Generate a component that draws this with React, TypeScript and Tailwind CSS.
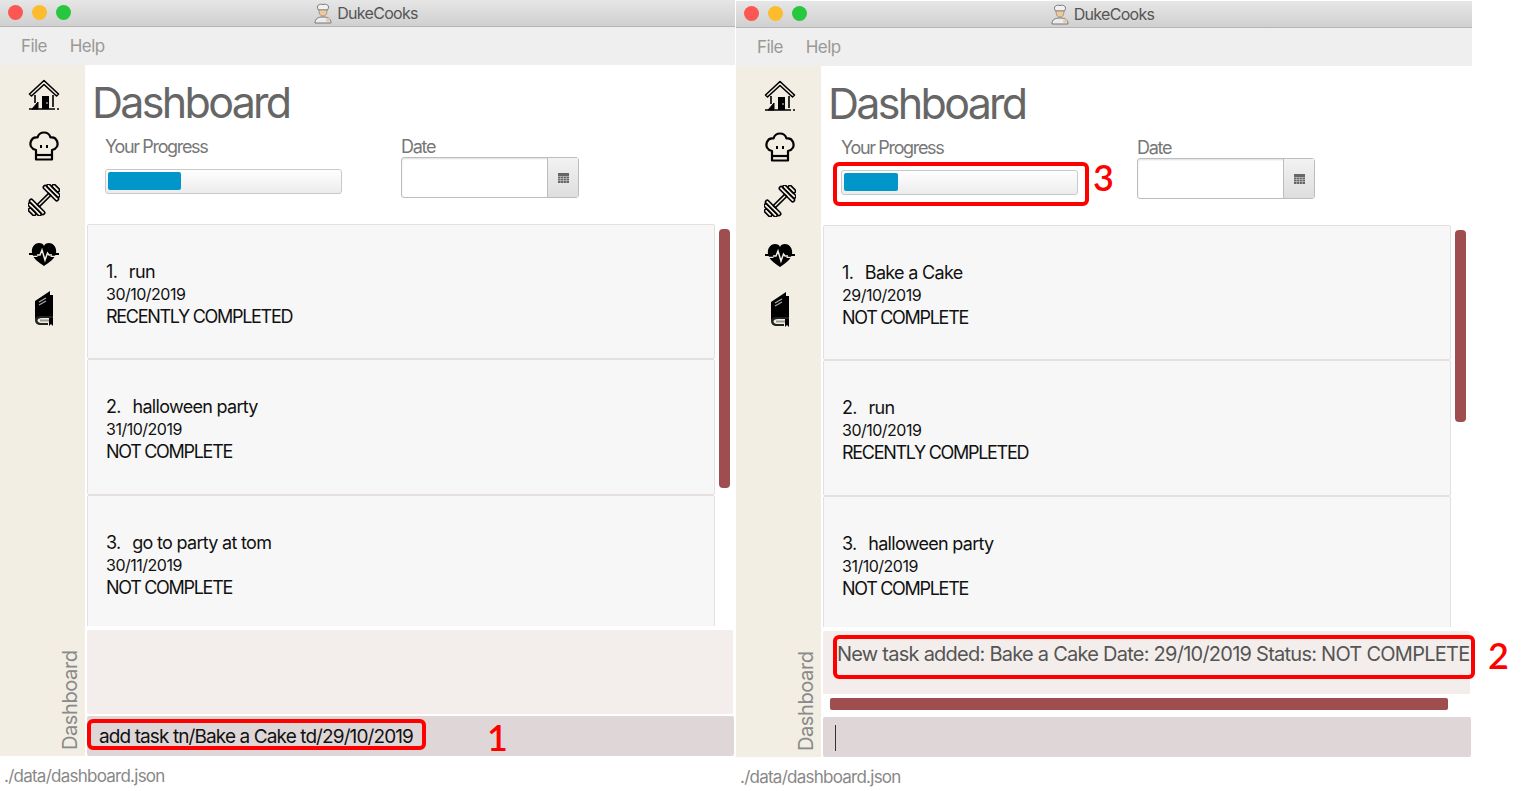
import React from "react";

const FONT = "font-['Inter','Liberation_Sans',sans-serif]";

function HouseIcon() {
  return (
    <svg viewBox="0 0 32 32" className="w-8 h-8" fill="none" stroke="#000">
      <path d="M1.5 15 L16 1.5 L30.5 15 L28.5 17 L16 5.5 L3.5 17 Z" strokeWidth="1.6" strokeLinejoin="round" />
      <path d="M7 16 V24 M25 16 V28" strokeWidth="1.6" />
      <path d="M1 30 H27 M29 30 H31" strokeWidth="1.6" />
      <path d="M4 30 L10 23 V30 Z" fill="#000" strokeWidth="1" />
      <rect x="14" y="17" width="7" height="13" fill="#000" stroke="none" />
      <circle cx="19" cy="24" r="0.8" fill="#fff" stroke="none" />
    </svg>
  );
}

function HatIcon() {
  return (
    <svg viewBox="0 0 30 30" className="w-[30px] h-[30px]" fill="none" stroke="#000" strokeWidth="2.2" strokeLinejoin="round">
      <path d="M7 19 C2 18 0.5 14 2 10 C3.5 6.5 6 6 8.5 6.5 C9.5 3 12.5 1.5 15 1.5 C18 1.5 20.5 3 21.5 6.5 C24 6 26.5 6.5 28 10 C29.5 14 28 18 23 19 V28.5 H7 Z" />
      <path d="M7 24 H23" />
      <path d="M12 14 V17 M18 14 V17" strokeWidth="2" />
    </svg>
  );
}

function DumbbellIcon() {
  return (
    <svg viewBox="0 0 32 32" className="w-8 h-8" fill="none" stroke="#000" strokeWidth="1.6" strokeLinejoin="round" strokeLinecap="round">
      <g transform="rotate(-45 16 16)">
        <rect x="-2.5" y="11.5" width="3.5" height="9" rx="1.7" />
        <rect x="1" y="7.5" width="3.5" height="17" rx="1.7" />
        <rect x="4.5" y="6" width="3.5" height="20" rx="1.7" />
        <path d="M8 14.5 H24 V17.5 H8 Z" />
        <rect x="24" y="6" width="3.5" height="20" rx="1.7" />
        <rect x="27.5" y="7.5" width="3.5" height="17" rx="1.7" />
        <rect x="31" y="11.5" width="3.5" height="9" rx="1.7" />
      </g>
    </svg>
  );
}

function HeartIcon() {
  return (
    <svg viewBox="0 0 32 26" className="w-8 h-[26px]">
      <path d="M16 25 C10 21 5 17.5 4 12 C3 6 7 2 11 2 C13.5 2 15.5 3 16 5 C16.5 3 18.5 2 21 2 C25 2 29 6 28 12 C27 17.5 22 21 16 25 Z" fill="#000" />
      <path d="M1 13 H8 M24 13 H31" fill="none" stroke="#000" strokeWidth="2.2" />
      <path d="M3 15.4 H9.5 M22.5 15.4 H29" fill="none" stroke="#f2eee4" strokeWidth="1.4" />
      <path d="M9 14 H12 L14 9 L17 19 L19.5 12 L21 14 H24" fill="none" stroke="#f2eee4" strokeWidth="1.5" />
    </svg>
  );
}

function BookIcon() {
  return (
    <svg viewBox="0 0 24 36" className="w-6 h-9">
      <path d="M3 11 L18 1 V5 H21 V27 H9 C6 27 3.5 28 3 30 Z" fill="#000" />
      <path d="M7 12 L14 8 M7 15 L14 11" stroke="#aaa" strokeWidth="1.2" />
      <path d="M3 30 C3 27 6 26 9 26 H21 V28 H10 C7 28 5.5 29 5.5 30.5 C5.5 32 7 33 9 33 H16 V35 H9 C5 35 3 33 3 30 Z" fill="#222" />
      <path d="M8 29.5 H17 V31.5 H8 Z" fill="#999" />
      <path d="M17 28 H21 V36 L19 34 L17 36 Z" fill="#000" />
    </svg>
  );
}

function Sidebar() {
  return (
    <div className="w-[85px] shrink-0 bg-[#f2eee4] flex flex-col relative">
      <div className="flex flex-col items-center pl-[3px] pt-[14px]">
        <div className="h-8 flex items-center justify-center"><HouseIcon /></div>
        <div className="h-[30px] mt-[20px] flex items-center justify-center"><HatIcon /></div>
        <div className="h-8 mt-[23px] flex items-center justify-center"><DumbbellIcon /></div>
        <div className="h-7 mt-[24px] flex items-center justify-center"><HeartIcon /></div>
        <div className="h-9 mt-[22px] flex items-center justify-center"><BookIcon /></div>
      </div>
      <div className="mt-auto mb-[6px] ml-[58px] w-[24px] h-[100px] [writing-mode:vertical-rl] rotate-180 text-[20px] leading-[24px] tracking-[-0.4px] text-[#8a8a8a] text-left whitespace-nowrap">
        Dashboard
      </div>
    </div>
  );
}

type Task = { n: number; name: string; date: string; status: string };

function TaskCard({ task, h }: { task: Task; h: string }) {
  return (
    <div className={`${h} shrink-0 bg-[#f7f7f7] border border-[#e5dfdf] rounded-[2px] pl-[18px] pt-[35px] text-[#111]`}>
      <div className="text-[18px] leading-[23px] tracking-[-0.7px]">
        <span className="mr-[3px]">{task.n}.&nbsp;</span> {task.name}
      </div>
      <div className="text-[16px] leading-[23px] tracking-[-0.5px]">{task.date}</div>
      <div className="text-[18px] leading-[22px] tracking-[-1.3px]">{task.status}</div>
    </div>
  );
}

function Header({ progress }: { progress: string }) {
  return (
    <div className="h-[159px] shrink-0 bg-white pl-[7px]">
      <div className="text-[43px] leading-[52px] tracking-[-2.7px] text-[#666] pt-[11px] h-[70px]">Dashboard</div>
      <div className="flex pl-[13px]">
        <div className="w-[296px]">
          <div className="text-[18px] leading-[24px] tracking-[-1.35px] text-[#777]">Your Progress</div>
          <div className="mt-[10px] w-[237px] h-[25px] rounded-[3px] border border-[#c9c9c9] bg-gradient-to-b from-white to-[#ececec] p-[2px]">
            <div className={`${progress} h-[18px] rounded-[2px] bg-[#0096c9]`} />
          </div>
        </div>
        <div>
          <div className="text-[18px] leading-[24px] -mb-[2px] tracking-[-1.3px] text-[#777]">Date</div>
          <div className="w-[178px] h-[41px] flex rounded-[3px] border border-[#bdbdbd] bg-white shadow-[inset_0_1px_2px_#ddd]">
            <div className="flex-1" />
            <div className="w-[31px] border-l border-[#bdbdbd] bg-gradient-to-b from-[#f2f2f2] to-[#dedede] flex items-center justify-center">
              <svg viewBox="0 0 11 10" className="w-[11px] h-[10px]">
                <rect width="11" height="10" fill="#666" />
                <path d="M0 3.5 H11 M0 5.5 H11 M0 7.5 H11 M2.7 3 V10 M5.5 3 V10 M8.3 3 V10" stroke="#cfcfcf" strokeWidth="0.6" />
              </svg>
            </div>
          </div>
        </div>
      </div>
    </div>
  );
}

type WindowProps = { tasks: Task[]; thumb: string; progress: string; result?: string; caret?: boolean; cmd?: string; wide: string };

const CARD_HEIGHTS = ["h-[135px]", "h-[136px]", "h-[140px]"];

function Window({ tasks, thumb, progress, result, caret, cmd, wide }: WindowProps) {
  return (
    <div className={`${wide} shrink-0 flex flex-col h-[791px]`}>
      <div className="h-[27px] shrink-0 relative flex items-center justify-center bg-gradient-to-b from-[#e6e6e6] to-[#d0d0d0] border-b border-[#b5b5b5]">
        <div className="absolute left-[8px] top-[5px] flex gap-[9px]">
          <span className="w-[15px] h-[15px] rounded-full bg-[#fc5753]" />
          <span className="w-[15px] h-[15px] rounded-full bg-[#fdbc2e]" />
          <span className="w-[15px] h-[15px] rounded-full bg-[#27c83f]" />
        </div>
        <div className="flex items-center gap-[5px] pr-[3px] text-[16px] tracking-[-0.7px] text-[#555]">
          <svg viewBox="0 0 18 21" className="w-[18px] h-[21px]">
            <path d="M4.5 7 C1.5 2.5 5.5 0.5 9 1.5 C12.5 0.5 16.5 2.5 13.5 7 Z" fill="#f1f1f1" stroke="#777" strokeWidth="1" />
            <path d="M5 7 C5 11.5 6.5 13 9 13 C11.5 13 13 11.5 13 7 Z" fill="#eec9a0" stroke="#8a7a68" strokeWidth="0.7" />
            <path d="M1 20 C1 15.5 4 14 9 14 C14 14 17 15.5 17 20 Z" fill="#ececec" stroke="#777" strokeWidth="1" />
            <circle cx="14" cy="17" r="2" fill="#eec9a0" />
          </svg>
          DukeCooks
        </div>
      </div>
      <div className="h-[38px] shrink-0 bg-[#efefef] flex items-center pl-[21px] pt-[1px] gap-[23px] text-[17px] tracking-[-0.6px] text-[#999]">
        <span>File</span>
        <span>Help</span>
      </div>
      <div className="h-[691px] shrink-0 flex">
        <Sidebar />
        <div className="flex-1 flex flex-col min-w-0 bg-white">
          <Header progress={progress} />
          <div className="h-[402px] shrink-0 flex overflow-hidden pl-[2px]">
            <div className="w-[628px] shrink-0 flex flex-col">
              {tasks.map((t, i) => (
                <TaskCard key={t.n} task={t} h={CARD_HEIGHTS[i]} />
              ))}
            </div>
            <div className="pl-[4px] pt-[5px]">
              <div className={`w-[11px] ${thumb} rounded-[4px] bg-[#a04d50]`} />
            </div>
          </div>
          <div className="h-[84px] mt-[4px] shrink-0 ml-[2px] mr-[2px] bg-[#f3eeeb] rounded-[2px] flex flex-col justify-between overflow-hidden">
            {result ? (
              <>
                <div className="pl-[14px] pt-[10px] text-[20px] leading-[26px] tracking-[-0.75px] whitespace-nowrap text-[#555]">{result}</div>
                <div className="h-[21px] bg-white pl-[7px] pt-[4px]">
                  <div className="w-[618px] h-[12px] rounded-[2px] bg-[#a04d50]" />
                </div>
              </>
            ) : null}
          </div>
          <div className="h-[40px] mt-[2px] shrink-0 ml-[2px] mr-px bg-[#dfd6d7] rounded-[2px] flex items-center pl-[12px] pt-[2px] text-[19px] tracking-[-0.9px] text-[#111]">
            {cmd}
            {caret ? <div className="w-px h-[26px] bg-[#333]" /> : null}
          </div>
        </div>
      </div>
      <div className="h-[35px] shrink-0 bg-white pl-[4px] pt-[8px] text-[17px] leading-[24px] tracking-[-0.75px] text-[#888]">./data/dashboard.json</div>
    </div>
  );
}

function Mark({ className, n, numClass }: { className: string; n: string; numClass: string }) {
  return (
    <>
      <div className={`absolute border-[4px] border-[#ff0000] rounded-[6px] ${className}`} />
      <div className={`absolute text-[#ff0000] font-['Lato',sans-serif] font-semibold text-[36px] leading-[40px] ${numClass}`}>{n}</div>
    </>
  );
}

const left: Task[] = [
  { n: 1, name: "run", date: "30/10/2019", status: "RECENTLY COMPLETED" },
  { n: 2, name: "halloween party", date: "31/10/2019", status: "NOT COMPLETE" },
  { n: 3, name: "go to party at tom", date: "30/11/2019", status: "NOT COMPLETE" },
];
const right: Task[] = [
  { n: 1, name: "Bake a Cake", date: "29/10/2019", status: "NOT COMPLETE" },
  { n: 2, name: "run", date: "30/10/2019", status: "RECENTLY COMPLETED" },
  { n: 3, name: "halloween party", date: "31/10/2019", status: "NOT COMPLETE" },
];

export default function App() {
  return (
    <div className={`relative w-[1535px] h-[791px] overflow-hidden bg-white flex ${FONT}`}>
      <Window wide="w-[735px]" tasks={left} thumb="h-[259px]" progress="w-[73px]" cmd="add task tn/Bake a Cake td/29/10/2019" />
      <div className="w-px shrink-0" />
      <div className="pt-px">
        <Window
          wide="w-[736px]"
          tasks={right}
          thumb="h-[192px]"
          progress="w-[54px]"
          caret
          result="New task added: Bake a Cake Date: 29/10/2019 Status: NOT COMPLETE"
        />
      </div>
      <Mark className="left-[87px] top-[719px] w-[339px] h-[31px]" n="1" numClass="left-[487px] top-[717px]" />
      <Mark className="left-[833px] top-[635px] w-[642px] h-[44px]" n="2" numClass="left-[1488px] top-[635px]" />
      <Mark className="left-[833px] top-[162px] w-[256px] h-[44px]" n="3" numClass="left-[1093px] top-[157px]" />
    </div>
  );
}
